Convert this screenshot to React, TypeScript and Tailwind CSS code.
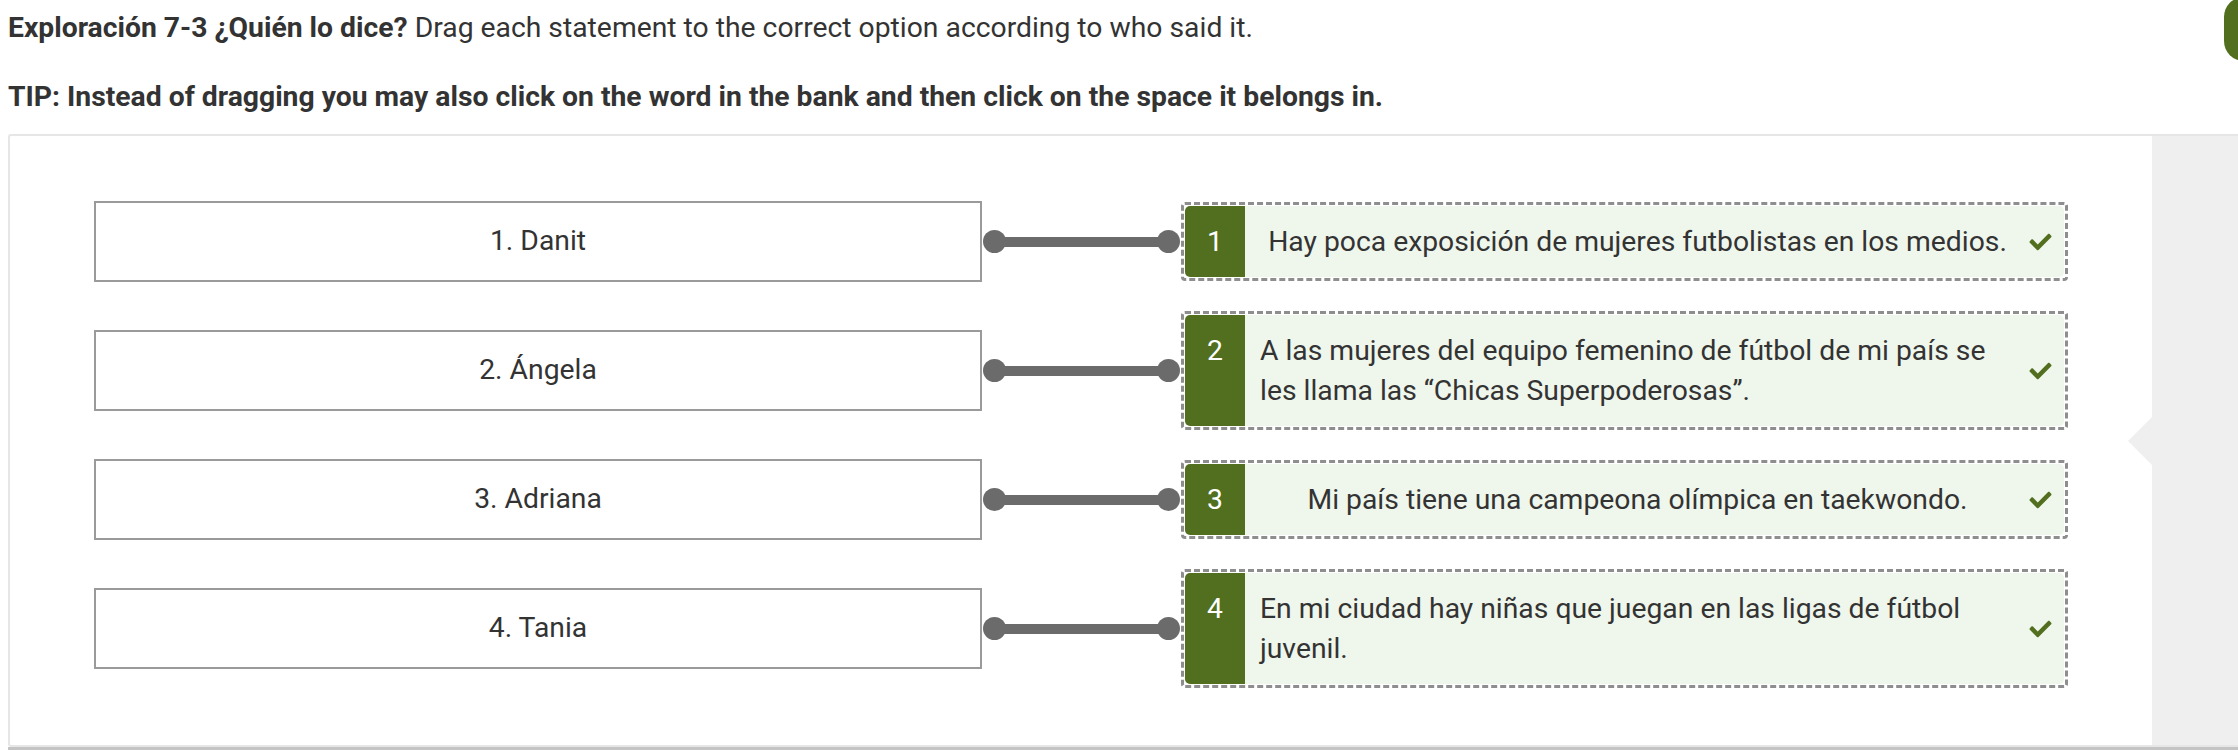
import { FaCheck } from "react-icons/fa";

const rows = [
  { name: "1. Danit", text: "Hay poca exposición de mujeres futbolistas en los medios." },
  {
    name: "2. Ángela",
    text: "A las mujeres del equipo femenino de fútbol de mi país se les llama las “Chicas Superpoderosas”.",
  },
  { name: "3. Adriana", text: "Mi país tiene una campeona olímpica en taekwondo." },
  { name: "4. Tania", text: "En mi ciudad hay niñas que juegan en las ligas de fútbol juvenil." },
];

function Connector() {
  return (
    <div className="flex w-[199px] shrink-0 items-center px-[1px]">
      <span className="h-[23px] w-[23px] shrink-0 rounded-full bg-[#6b6b6b]" />
      <span className="-mx-[11px] h-[10px] flex-1 bg-[#6b6b6b]" />
      <span className="h-[23px] w-[23px] shrink-0 rounded-full bg-[#6b6b6b]" />
    </div>
  );
}

function Statement({ n, text }: { n: number; text: string }) {
  return (
    <div className="w-[887px] shrink-0 rounded-[4px] border-[3px] border-dashed border-[#8e8e8e] p-[1px]">
      <div className="flex overflow-hidden rounded-[5px] bg-[#eff6ec] text-[28.3px] leading-[39.5px] text-[#333]">
        <div className="w-[60px] shrink-0 bg-[#526f1f] py-4 text-center text-white">{n}</div>
        <div className="flex flex-1 items-center gap-[5px] py-4 pl-[15px] pr-[10px]">
          <div className="flex flex-1 justify-center pr-[7px]">
            <div>{text}</div>
          </div>
          <FaCheck className="h-[22px] w-[27px] shrink-0 text-[#526f1f]" />
        </div>
      </div>
    </div>
  );
}

export default function App() {
  return (
    <div className="relative h-[750px] w-[2238px] overflow-hidden bg-white font-['Roboto',sans-serif] text-[#333]">
      <div className="absolute left-[2224px] top-[-3px] h-[64px] w-[60px] rounded-[20px] bg-[#526f1f]" />

      <div className="pl-2 pt-[8px]">
        <p className="text-[28.3px] leading-[40px]">
          <b className="font-bold">Exploración 7-3 ¿Quién lo dice?</b> Drag each statement to the correct option
          according to who said it.
        </p>
        <p className="mt-[29px] text-[28.3px] font-bold leading-[40px]">
          TIP: Instead of dragging you may also click on the word in the bank and then click on the space it belongs
          in.
        </p>
      </div>

      <div className="ml-2 mt-[17px] flex rounded-l-[3px] border-y-2 border-l-2 border-[#e6e6e6]">
        <div className="flex flex-1 flex-col gap-[29px] px-[84px] pb-[57px] pt-[65px]">
          {rows.map((r, i) => (
            <div key={r.name} className="flex items-center">
              <div className="flex h-[81px] w-[888px] shrink-0 items-center justify-center border-2 border-[#9a9a9a] text-[28.3px] text-[#333]">
                {r.name}
              </div>
              <Connector />
              <Statement n={i + 1} text={r.text} />
            </div>
          ))}
        </div>
        <div className="relative w-[86px] shrink-0 bg-[#efefef]">
          <span className="absolute left-[-24px] top-[281px] h-0 w-0 border-y-[24px] border-r-[24px] border-y-transparent border-r-[#efefef]" />
        </div>
      </div>
      <div className="ml-2 h-[6px] bg-[#c4c4c4]" />
    </div>
  );
}
